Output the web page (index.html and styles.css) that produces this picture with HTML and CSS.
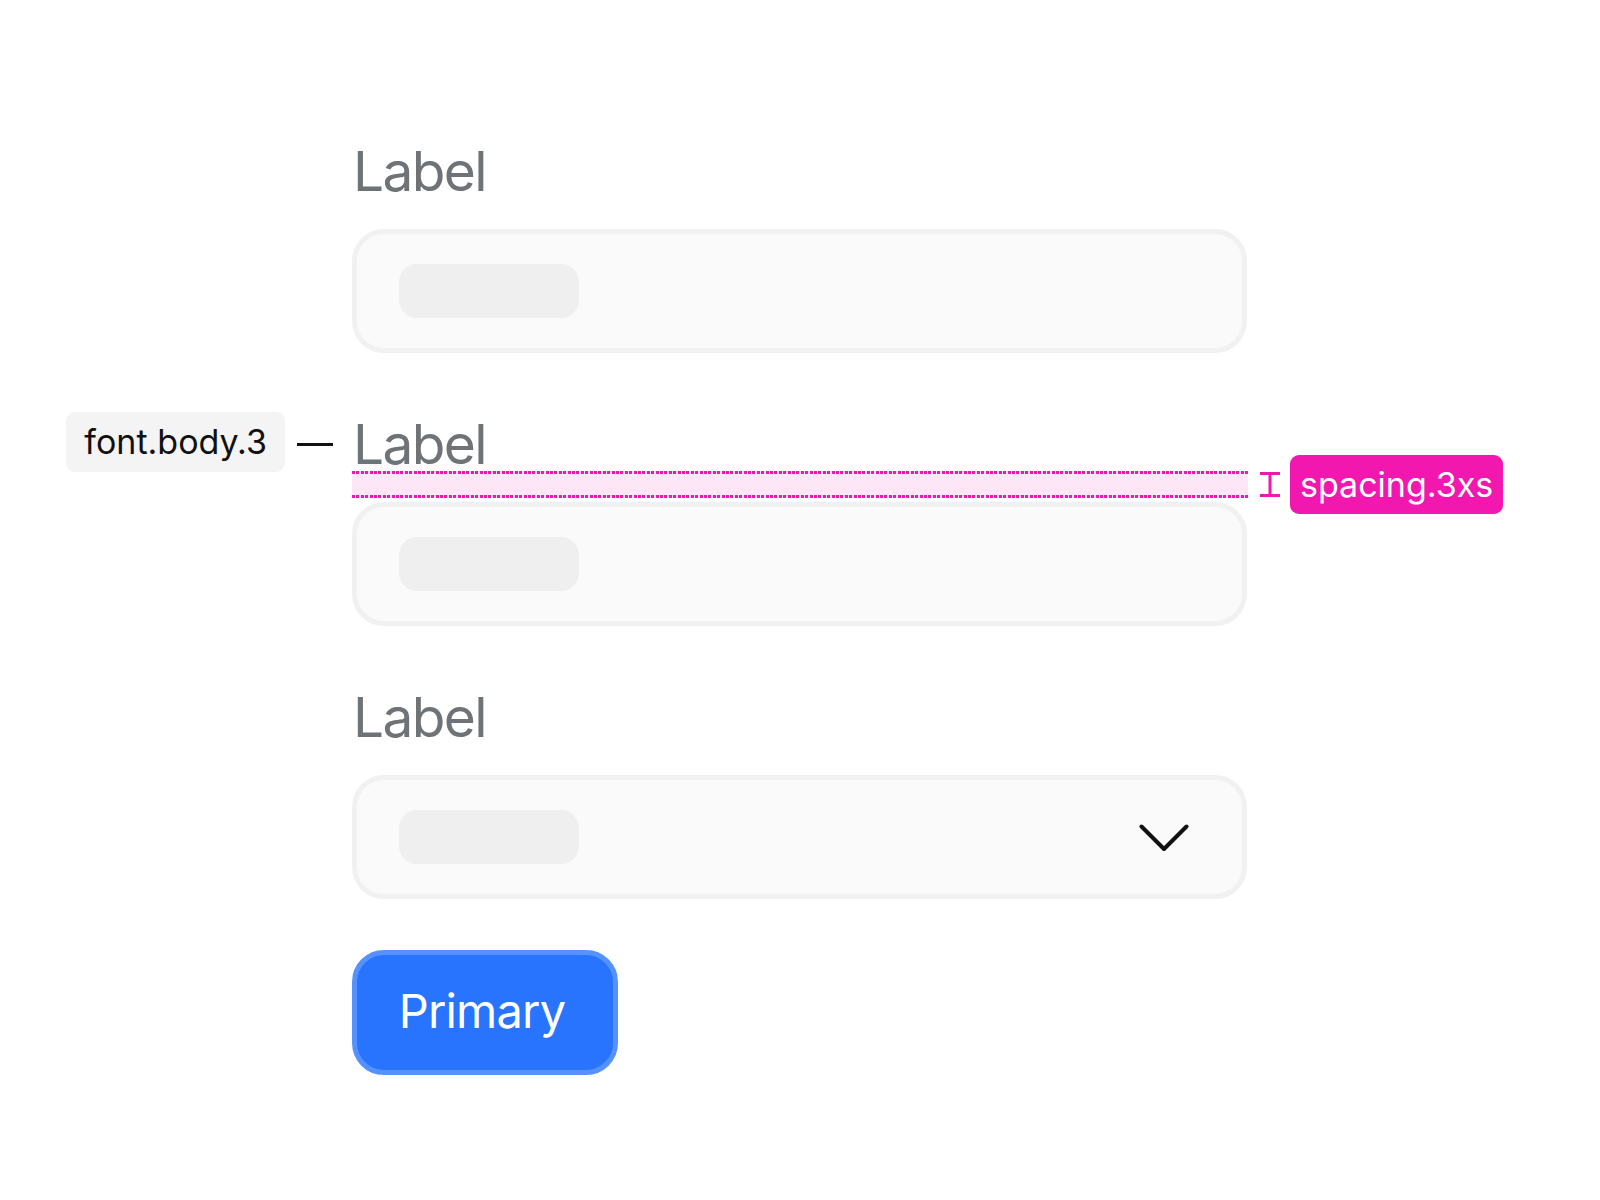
FILE: index.html
```html
<!DOCTYPE html>
<html lang="en">
<head>
<meta charset="utf-8">
<title>Form spec</title>
<link rel="stylesheet" href="styles.css">
</head>
<body>
<main class="page">
  <form class="form">
    <div class="fields">
      <div class="field-group">
        <label class="label">Label</label>
        <div class="input"><span class="placeholder"></span></div>
      </div>
      <div class="field-group">
        <div class="label-row">
          <span class="token token-font">font.body.3</span>
          <span class="token-dash"></span>
          <label class="label">Label</label>
        </div>
        <div class="spacing-band"></div>
        <svg class="ibeam" width="20" height="27" viewBox="0 0 20 27" aria-hidden="true">
          <path d="M0 2.5H20M10 2.5V24.5M0 24.5H20" fill="none" stroke="#f217ae" stroke-width="3"/>
        </svg>
        <span class="token token-spacing">spacing.3xs</span>
        <div class="input"><span class="placeholder"></span></div>
      </div>
      <div class="field-group">
        <label class="label">Label</label>
        <div class="input select">
          <span class="placeholder"></span>
          <svg class="chevron" width="50" height="28" viewBox="0 0 50 28" aria-hidden="true">
            <path d="M2.5 2.5L25 25L47.5 2.5" fill="none" stroke="#111111" stroke-width="4" stroke-linecap="round" stroke-linejoin="round"/>
          </svg>
        </div>
      </div>
    </div>
    <div class="actions">
      <button type="button" class="btn-primary">Primary</button>
    </div>
  </form>
</main>
</body>
</html>
```

FILE: styles.css
```css
html, body {
  margin: 0;
  padding: 0;
  background: #ffffff;
}

body {
  font-family: Inter, "Noto Sans", "Liberation Sans", sans-serif;
  width: 1600px;
  height: 1200px;
  overflow: hidden;
}

.page {
  padding: 143px 0 0 352px;
}

.form {
  display: flex;
  flex-direction: column;
  width: 895px;
}

.fields {
  display: flex;
  flex-direction: column;
  gap: 63px;
}

.field-group {
  position: relative;
  display: flex;
  flex-direction: column;
  gap: 30px;
}

.label-row {
  position: relative;
  display: flex;
}

.label {
  display: block;
  font-size: 55px;
  line-height: 56px;
  font-weight: 400;
  color: #6e7378;
  letter-spacing: -1.6px;
  padding-left: 1px;
}

.input {
  box-sizing: border-box;
  height: 124px;
  border: 5px solid #f1f1f1;
  border-radius: 32px;
  background: #fafafa;
  display: flex;
  align-items: center;
  padding: 0 53px 0 42px;
}

.select {
  justify-content: space-between;
}

.placeholder {
  display: block;
  width: 180px;
  height: 54px;
  border-radius: 18px;
  background: #efefef;
}

.chevron {
  display: block;
  margin-top: 1px;
}

.actions {
  margin-top: 51px;
  display: flex;
}

.btn-primary {
  box-sizing: border-box;
  width: 266px;
  height: 125px;
  border: 5px solid #5592ff;
  border-radius: 32px;
  background: #2874ff;
  color: #ffffff;
  font-family: Inter, "Noto Sans", "Liberation Sans", sans-serif;
  font-size: 47px;
  line-height: 1;
  letter-spacing: -0.8px;
  padding: 0 6px 5px 0;
}

/* annotations */
.token {
  position: absolute;
  box-sizing: border-box;
  display: flex;
  align-items: center;
  height: 60px;
  border-radius: 9px;
  font-size: 34px;
  line-height: 1;
  white-space: nowrap;
}

.token-font {
  right: calc(100% + 67px);
  top: -4px;
  padding: 0 18px;
  background: #f4f4f4;
  color: #111111;
}

.token-dash {
  position: absolute;
  left: -55px;
  top: 27px;
  width: 36px;
  height: 3px;
  background: #111111;
}

.spacing-band {
  position: absolute;
  left: 0;
  top: 55px;
  width: 896px;
  height: 27px;
  background-color: #fde6f6;
  background-image:
    repeating-linear-gradient(90deg, #f217ae 0 3px, transparent 3px 4.4px),
    repeating-linear-gradient(90deg, #f217ae 0 3px, transparent 3px 4.4px);
  background-size: 100% 3px, 100% 3px;
  background-position: 0 0, 0 100%;
  background-repeat: no-repeat;
}

.ibeam {
  position: absolute;
  left: 908px;
  top: 55px;
}

.token-spacing {
  left: 938px;
  top: 39px;
  height: 59px;
  padding: 0 10px;
  background: #f217ae;
  color: #ffffff;
}
```
